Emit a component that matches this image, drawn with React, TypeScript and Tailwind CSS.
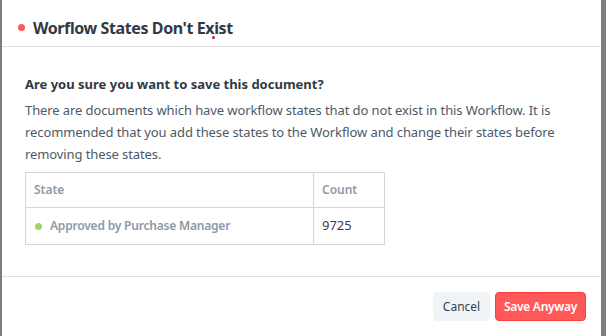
export default function App() {
  return (
    <div className="flex h-[336px] w-[606px] overflow-hidden bg-[#7b7f80] font-['Noto_Sans',sans-serif]">
      <div className="ml-[2px] flex h-full w-[599px] flex-col bg-white">
        {/* header */}
        <div className="relative flex h-[47px] items-center gap-[8px] border-b border-[#e2e2e2] pl-[16px] pt-[9px]">
          <span className="h-[7px] w-[7px] rounded-full bg-[#ff5858]" />
          <h4 className="text-[16px] font-bold leading-none tracking-[-0.4px] text-[#2f3a44]">Worflow States Don't Exist</h4>
          <span className="absolute left-[210px] top-[36px] h-[3px] w-[3px] rounded-full bg-[#e8102b]" />
        </div>

        {/* body */}
        <div className="px-[23px] pt-[27px]">
          <p className="text-[13px] font-bold leading-[20px] text-[#2f3a44]">
            Are you sure you want to save this document?
          </p>
          <p className="mt-[5px] w-[550px] text-[13px] leading-[22px] tracking-[-0.1px] text-[#4c5a67]">
            There are documents which have workflow states that do not exist in this Workflow. It is
            recommended that you add these states to the Workflow and change their states before
            removing these states.
          </p>

          <table className="mt-[7px] w-[360px] border-collapse border border-[#d1d8dd] text-[12px]">
            <thead>
              <tr className="h-[35px]">
                <th className="border border-[#d1d8dd] pl-[8px] text-left font-semibold text-[#8d99a6]">State</th>
                <th className="w-[71px] border border-[#d1d8dd] pl-[8px] text-left font-semibold text-[#8d99a6]">Count</th>
              </tr>
            </thead>
            <tbody>
              <tr className="h-[37px]">
                <td className="border border-[#d1d8dd] pl-[9px]">
                  <span className="flex items-center gap-[8px] font-semibold tracking-[-0.2px] text-[#8d99a6]">
                    <span className="h-[7px] w-[7px] rounded-full bg-[#98d85b]" />
                    Approved by Purchase Manager
                  </span>
                </td>
                <td className="border border-[#d1d8dd] pl-[8px] text-[13px] text-[#36414c]">9725</td>
              </tr>
            </tbody>
          </table>
        </div>

        {/* footer */}
        <div className="mt-auto mb-[15px] flex justify-end gap-[5px] border-t border-[#e2e2e2] pr-[15px] pt-[15px]">
          <button className="h-[29px] w-[57px] rounded-[4px] bg-[#f0f4f7] text-[12px] text-[#36414c]">Cancel</button>
          <button className="h-[29px] w-[91px] rounded-[4px] border border-[#ff3a3a] bg-[#ff5858] text-[12px] font-semibold tracking-[-0.3px] text-white">
            Save Anyway
          </button>
        </div>
      </div>
    </div>
  );
}
